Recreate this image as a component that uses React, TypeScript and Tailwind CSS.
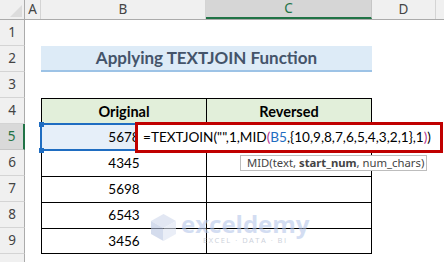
import React from "react";

const HEAD = "flex items-center justify-center border-r border-[#d4d4d4]";

function RowHead({ n, active }: { n?: number; active?: boolean }) {
  return (
    <div
      className={
        active
          ? "flex w-[25px] shrink-0 items-center justify-center border-b border-r-2 border-b-[#c6c6c6] border-r-[#217346] bg-[#d9d9d9] text-[#217346]"
          : "flex w-[25px] shrink-0 items-center justify-center border-b border-r border-b-[#d4d4d4] border-r-[#ababab] bg-[#f0f0f0]"
      }
    >
      {n}
    </div>
  );
}

function Row({ n, children, active }: { n?: number; children?: React.ReactNode; active?: boolean }) {
  return (
    <div className="flex h-[26px]">
      <RowHead n={n} active={active} />
      <div className="w-[16px] shrink-0" />
      {children}
    </div>
  );
}

function DataRow({ n, value, last }: { n: number; value: string; last?: boolean }) {
  return (
    <Row n={n}>
      <div
        className={
          "flex w-[165px] shrink-0 items-center justify-center border-l border-t border-black font-['Lato',sans-serif] text-[13.5px] text-black " +
          (last ? "border-b" : "")
        }
      >
        {value}
      </div>
      <div className={"w-[166px] shrink-0 border-x border-t border-black " + (last ? "border-b" : "")} />
    </Row>
  );
}

export default function App() {
  return (
    <div className="relative h-[262px] w-[444px] overflow-hidden bg-white font-['Noto_Sans',sans-serif] text-[13.5px] text-[#444]">
      {/* column headers */}
      <div className="flex h-[20px] border-b border-[#ababab] bg-[#f0f0f0]">
        <div className="relative w-[25px] shrink-0 border-r border-[#ababab]">
          <svg className="absolute left-0 top-0" width="25" height="20" viewBox="0 0 25 20">
            <polygon points="10,17 22,17 22,5" fill="#dcdcdc" />
          </svg>
        </div>
        <div className={HEAD + " w-[16px] shrink-0"}>A</div>
        <div className={HEAD + " w-[165px] shrink-0"}>B</div>
        <div className="flex w-[166px] shrink-0 items-center justify-center border-b-2 border-r border-b-[#217346] border-r-[#c6c6c6] bg-[#d6d6d6] text-[#217346]">
          C
        </div>
        <div className={HEAD + " w-[64px] shrink-0"}>D</div>
        <div className="flex-1" />
      </div>

      {/* rows */}
      <Row n={1} />
      <Row n={2}>
        <div className="flex w-[331px] shrink-0 items-center justify-center border-b-2 border-[#9dc3e6] bg-[#ddebf7] font-['Lato',sans-serif] text-[17px] font-bold text-[#44546a]">
          Applying TEXTJOIN Function
        </div>
      </Row>
      <Row n={3} />
      <Row n={4}>
        <div className="flex w-[165px] shrink-0 items-center justify-center border-l border-t border-black bg-[#e2efda] font-['Lato',sans-serif] text-[14.5px] font-bold text-black">
          Original
        </div>
        <div className="flex w-[166px] shrink-0 items-center justify-center border-x border-t border-black bg-[#e2efda] font-['Lato',sans-serif] text-[14.5px] font-bold text-black">
          Reversed
        </div>
      </Row>
      <Row n={5} active>
        <div className="relative flex w-[165px] shrink-0 items-center justify-center border-l border-t border-black bg-[#e6eff9] font-['Lato',sans-serif] text-[13.5px] text-black">
          5678
          <div className="absolute -left-[2px] -top-[2px] h-[28px] w-[167px] border-2 border-[#1f6dc1]" />
          <div className="absolute -left-[3px] -top-[3px] h-[5px] w-[5px] bg-[#1f6dc1]" />
          <div className="absolute -bottom-[3px] -left-[3px] h-[5px] w-[5px] bg-[#1f6dc1]" />
          <div className="absolute -bottom-[3px] -right-[3px] h-[5px] w-[5px] bg-[#1f6dc1]" />
        </div>
        <div className="w-[166px] shrink-0 border-x border-t border-black" />
      </Row>
      <DataRow n={6} value="4345" />
      <DataRow n={7} value="5698" />
      <DataRow n={8} value="6543" />
      <DataRow n={9} value="3456" last />
      <Row />

      {/* watermark */}
      <div className="pointer-events-none absolute left-[151px] top-[212px] flex items-start gap-[5px] opacity-60">
        <svg width="25" height="27" viewBox="0 0 25 27" className="mt-[2px]">
          <polygon points="12.5,0 25,7 12.5,14 0,7" fill="#cfd8ec" />
          <polygon points="0,7 12.5,14 12.5,27 0,20" fill="#b9c5e2" />
          <polygon points="25,7 12.5,14 12.5,27 25,20" fill="#dde4f2" />
        </svg>
        <div className="flex flex-col items-center">
          <div className="whitespace-nowrap font-['Open_Sans',sans-serif] text-[24px] font-bold leading-[24px] text-[#b7c8ea]">
            exceldemy
          </div>
          <div className="whitespace-nowrap font-['Open_Sans',sans-serif] text-[7.5px] leading-[9px] tracking-[1.5px] text-[#aab3c4]">
            EXCEL · DATA · BI
          </div>
        </div>
      </div>

      {/* formula being typed */}
      <div className="absolute left-[135px] top-[122px] flex h-[31px] w-[308px] items-center whitespace-nowrap border-[3px] border-[#c00000] bg-white pl-[5px] font-['Lato',sans-serif] text-[13.6px] text-black">
        =TEXTJOIN("",1,MID<span className="text-[#b4318f]">(</span>
        <span className="text-[#1f6dc1]">B5</span>,{"{"}10,9,8,7,6,5,4,3,2,1{"}"},1
        <span className="text-[#b4318f]">)</span>)
      </div>

      {/* tooltip */}
      <div className="absolute left-[240px] top-[155px] flex h-[16px] w-[187px] items-center whitespace-nowrap border border-[#bdbdbd] bg-white pl-[6px] text-[11.3px] text-[#444]">
        MID(text,&nbsp;<span className="font-bold">start_num</span>, num_chars)
      </div>
    </div>
  );
}
